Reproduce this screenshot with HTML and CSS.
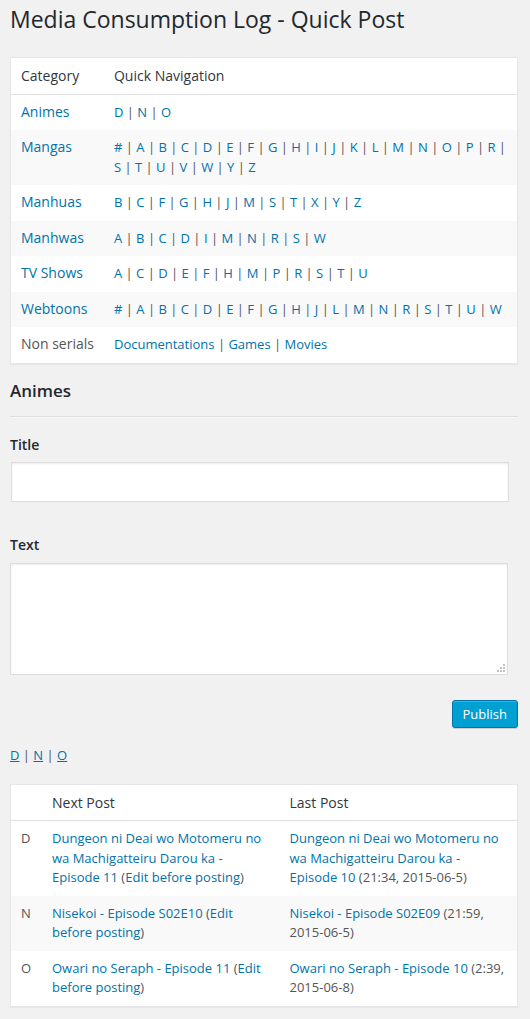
FILE: index.html
```html
<!DOCTYPE html>
<html lang="en">
<head>
<meta charset="utf-8">
<title>Media Consumption Log - Quick Post</title>
<link rel="stylesheet" href="styles.css">
</head>
<body>
<div class="wrap">
  <h1 class="page-title">Media Consumption Log - Quick Post</h1>

  <table class="widefat nav-table">
    <thead>
      <tr><th class="col-cat">Category</th><th>Quick Navigation</th></tr>
    </thead>
    <tbody>
      <tr>
        <td class="col-cat"><a href="#">Animes</a></td>
        <td><a href="#">D</a> | <a href="#">N</a> | <a href="#">O</a></td>
      </tr>
      <tr class="alt">
        <td class="col-cat"><a href="#">Mangas</a></td>
        <td><a href="#">#</a> | <a href="#">A</a> | <a href="#">B</a> | <a href="#">C</a> | <a href="#">D</a> | <a href="#">E</a> | <a href="#">F</a> | <a href="#">G</a> | <a href="#">H</a> | <a href="#">I</a> | <a href="#">J</a> | <a href="#">K</a> | <a href="#">L</a> | <a href="#">M</a> | <a href="#">N</a> | <a href="#">O</a> | <a href="#">P</a> | <a href="#">R</a> | <a href="#">S</a> | <a href="#">T</a> | <a href="#">U</a> | <a href="#">V</a> | <a href="#">W</a> | <a href="#">Y</a> | <a href="#">Z</a></td>
      </tr>
      <tr>
        <td class="col-cat"><a href="#">Manhuas</a></td>
        <td><a href="#">B</a> | <a href="#">C</a> | <a href="#">F</a> | <a href="#">G</a> | <a href="#">H</a> | <a href="#">J</a> | <a href="#">M</a> | <a href="#">S</a> | <a href="#">T</a> | <a href="#">X</a> | <a href="#">Y</a> | <a href="#">Z</a></td>
      </tr>
      <tr class="alt">
        <td class="col-cat"><a href="#">Manhwas</a></td>
        <td><a href="#">A</a> | <a href="#">B</a> | <a href="#">C</a> | <a href="#">D</a> | <a href="#">I</a> | <a href="#">M</a> | <a href="#">N</a> | <a href="#">R</a> | <a href="#">S</a> | <a href="#">W</a></td>
      </tr>
      <tr>
        <td class="col-cat"><a href="#">TV Shows</a></td>
        <td><a href="#">A</a> | <a href="#">C</a> | <a href="#">D</a> | <a href="#">E</a> | <a href="#">F</a> | <a href="#">H</a> | <a href="#">M</a> | <a href="#">P</a> | <a href="#">R</a> | <a href="#">S</a> | <a href="#">T</a> | <a href="#">U</a></td>
      </tr>
      <tr class="alt">
        <td class="col-cat"><a href="#">Webtoons</a></td>
        <td><a href="#">#</a> | <a href="#">A</a> | <a href="#">B</a> | <a href="#">C</a> | <a href="#">D</a> | <a href="#">E</a> | <a href="#">F</a> | <a href="#">G</a> | <a href="#">H</a> | <a href="#">J</a> | <a href="#">L</a> | <a href="#">M</a> | <a href="#">N</a> | <a href="#">R</a> | <a href="#">S</a> | <a href="#">T</a> | <a href="#">U</a> | <a href="#">W</a></td>
      </tr>
      <tr>
        <td class="col-cat plain">Non serials</td>
        <td><a href="#">Documentations</a> | <a href="#">Games</a> | <a href="#">Movies</a></td>
      </tr>
    </tbody>
  </table>

  <h2 class="section-title">Animes</h2>
  <hr class="divider">

  <form class="post-form">
    <label class="field-label" for="title">Title</label>
    <input class="text-input" type="text" id="title">
    <label class="field-label text-label" for="text">Text</label>
    <textarea class="text-area" id="text"></textarea>
    <div class="actions">
      <button type="button" class="button-primary">Publish</button>
    </div>
  </form>

  <p class="letter-links"><a href="#">D</a> | <a href="#">N</a> | <a href="#">O</a></p>

  <table class="widefat posts-table">
    <colgroup><col class="c-letter"><col><col></colgroup>
    <thead>
      <tr><th></th><th>Next Post</th><th>Last Post</th></tr>
    </thead>
    <tbody>
      <tr>
        <td>D</td>
        <td><a href="#">Dungeon ni Deai wo Motomeru no wa Machigatteiru Darou ka - Episode 11</a> (<a href="#">Edit before posting</a>)</td>
        <td><a href="#">Dungeon ni Deai wo Motomeru no wa Machigatteiru Darou ka - Episode 10</a> (21:34, 2015-06-5)</td>
      </tr>
      <tr class="alt">
        <td>N</td>
        <td><a href="#">Nisekoi - Episode S02E10</a> (<a href="#">Edit before posting</a>)</td>
        <td><a href="#">Nisekoi - Episode S02E09</a> (21:59, 2015-06-5)</td>
      </tr>
      <tr>
        <td>O</td>
        <td><a href="#">Owari no Seraph - Episode 11</a> (<a href="#">Edit before posting</a>)</td>
        <td><a href="#">Owari no Seraph - Episode 10</a> (2:39, 2015-06-8)</td>
      </tr>
    </tbody>
  </table>
</div>
</body>
</html>
```

FILE: styles.css
```css
html, body {
  margin: 0;
  padding: 0;
  background: #f1f1f1;
}

body {
  font-family: "Open Sans", "Liberation Sans", sans-serif;
  font-size: 13px;
  line-height: 1.4em;
  color: #444;
}

a {
  color: #0073aa;
  text-decoration: none;
}

.wrap {
  padding: 5px 12px 13px 10px;
}

.page-title {
  margin: 0;
  font-size: 23px;
  font-weight: 400;
  line-height: 29px;
  color: #23282d;
}

.widefat {
  width: 100%;
  border-spacing: 0;
  border: 1px solid #e5e5e5;
  background: #fff;
  box-shadow: 0 1px 1px rgba(0, 0, 0, 0.04);
}

.widefat th {
  text-align: left;
  font-weight: 400;
  font-size: 14px;
  line-height: 1.4em;
  padding: 8px 10px;
  color: #32373c;
  border-bottom: 1px solid #e1e1e1;
}

.widefat td {
  padding: 8px 10px;
  font-size: 13px;
  line-height: 1.5em;
  color: #555;
  vertical-align: top;
}

.widefat tr.alt td {
  background: #f9f9f9;
}

.nav-table {
  margin-top: 23px;
}

.nav-table .col-cat {
  width: 1%;
  white-space: nowrap;
}

.nav-table td.col-cat {
  font-size: 14px;
  line-height: 1.35em;
}

.section-title {
  margin: 17px 0 0;
  font-size: 17px;
  font-weight: 600;
  line-height: 20px;
  color: #23282d;
}

.divider {
  margin: 15px 0 0;
  border: 0;
  border-top: 1px solid #ddd;
  border-bottom: 1px solid #fafafa;
  height: 0;
}

.post-form {
  display: flex;
  flex-direction: column;
  align-items: flex-start;
}

.field-label {
  margin-top: 17px;
  font-size: 14px;
  font-weight: 600;
  line-height: 20px;
  color: #23282d;
}

.text-label {
  margin-top: 33px;
}

.text-input {
  box-sizing: border-box;
  margin: 7px 0 0 1px;
  width: 98%;
  height: 40px;
  padding: 6px 10px;
  font-family: inherit;
  font-size: 16px;
  border: 1px solid #ddd;
  background: #fff;
  box-shadow: inset 0 1px 2px rgba(0, 0, 0, 0.07);
  outline: none;
}

.text-area {
  box-sizing: border-box;
  margin: 8px 0 0;
  width: 98%;
  height: 112px;
  padding: 6px 10px;
  font-family: inherit;
  font-size: 16px;
  border: 1px solid #ddd;
  background-color: #fff;
  background-image:
    linear-gradient(#c4c4c4, #c4c4c4),
    linear-gradient(#c4c4c4, #c4c4c4),
    linear-gradient(#c4c4c4, #c4c4c4),
    linear-gradient(#c4c4c4, #c4c4c4),
    linear-gradient(#c4c4c4, #c4c4c4),
    linear-gradient(#c4c4c4, #c4c4c4);
  background-size: 2px 2px;
  background-repeat: no-repeat;
  background-position:
    right 2px bottom 2px,
    right 5px bottom 2px,
    right 8px bottom 2px,
    right 2px bottom 5px,
    right 5px bottom 5px,
    right 2px bottom 8px;
  box-shadow: inset 0 1px 2px rgba(0, 0, 0, 0.07);
  outline: none;
  resize: none;
}

.actions {
  align-self: stretch;
  display: flex;
  justify-content: flex-end;
  margin-top: 25px;
}

.button-primary {
  height: 28px;
  padding: 0 10px 1px;
  font-family: inherit;
  font-size: 13px;
  line-height: 26px;
  color: #fff;
  background: #00a0d2;
  border: 1px solid #0073aa;
  border-radius: 3px;
  box-shadow: inset 0 1px 0 rgba(120, 200, 230, 0.5), 0 1px 0 rgba(0, 0, 0, 0.15);
  cursor: pointer;
}

.letter-links {
  margin: 18px 0 0;
  line-height: 19px;
  color: #555;
}

.letter-links a {
  text-decoration: underline;
}

.posts-table {
  margin-top: 19px;
  table-layout: fixed;
}

.posts-table .c-letter {
  width: 31px;
}
```
